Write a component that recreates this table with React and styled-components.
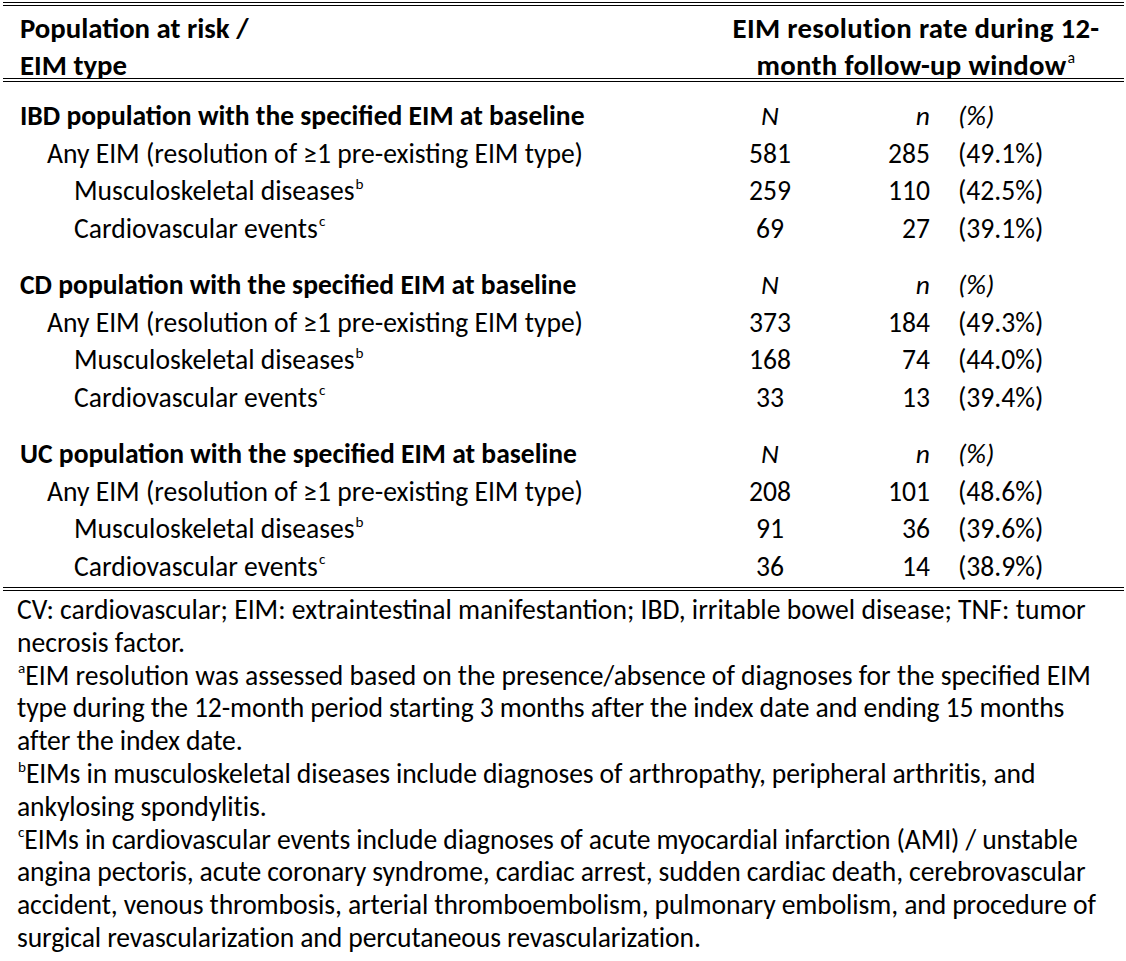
import React from 'react';
import styled, { createGlobalStyle } from 'styled-components';

const GlobalStyle = createGlobalStyle`
  html, body {
    margin: 0;
    padding: 0;
    background: #fff;
  }
  body {
    font-family: Carlito, Lato, "Liberation Sans", sans-serif;
    color: #000;
  }
`;

const Page = styled.div`
  width: 1121px;
  margin: 0 3px;
  padding-top: 2px;
  font-size: 27.6px;
`;

const Table = styled.div`
  border-top: 4px double #000;
  border-bottom: 4px double #000;
`;

const HeaderRow = styled.div`
  display: grid;
  grid-template-columns: 697px 1fr;
  border-bottom: 4px double #000;
  height: 76px;
  padding-top: 4px;
  box-sizing: border-box;
  line-height: 37px;
  font-size: 28.8px;
  font-weight: 700;
`;

const HeaderLabel = styled.div`
  padding-left: 17px;
  white-space: nowrap;
`;

const HeaderValue = styled.div`
  text-align: center;
  padding-left: 8px;
  letter-spacing: 0.3px;
  white-space: nowrap;
`;

const Section = styled.div`
  padding-top: ${(p) => (p.first ? 15 : 19)}px;
  padding-bottom: ${(p) => (p.last ? 2 : 0)}px;
`;

const Row = styled.div`
  display: grid;
  grid-template-columns: 697px 140px 94px 1fr;
  height: 37.5px;
  line-height: 37.5px;
  white-space: nowrap;
`;

const Label = styled.div`
  padding-left: ${(p) => 17 + p.level * 27}px;
  font-weight: ${(p) => (p.level === 0 ? 700 : 400)};
`;

const NCell = styled.div`
  text-align: center;
  font-style: ${(p) => (p.italic ? 'italic' : 'normal')};
`;

const SubCell = styled.div`
  text-align: right;
  padding-right: 4px;
  font-style: ${(p) => (p.italic ? 'italic' : 'normal')};
`;

const PctCell = styled.div`
  padding-left: 24px;
  font-style: ${(p) => (p.italic ? 'italic' : 'normal')};
`;

const Sup = styled.sup`
  font-size: 0.55em;
  line-height: 0;
  vertical-align: 0.75em;
  margin-left: 1px;
  font-weight: 400;
`;

const Notes = styled.div`
  padding: 3px 0 0 14px;
  line-height: 32.8px;
  white-space: nowrap;
`;

const Note = styled.p`
  margin: 0;
  letter-spacing: ${(p) => (p.condensed ? '-0.1px' : '0')};
`;

const sections = [
  {
    title: 'IBD population with the specified EIM at baseline',
    rows: [
      ['581', '285', '(49.1%)'],
      ['259', '110', '(42.5%)'],
      ['69', '27', '(39.1%)'],
    ],
  },
  {
    title: 'CD population with the specified EIM at baseline',
    rows: [
      ['373', '184', '(49.3%)'],
      ['168', '74', '(44.0%)'],
      ['33', '13', '(39.4%)'],
    ],
  },
  {
    title: 'UC population with the specified EIM at baseline',
    rows: [
      ['208', '101', '(48.6%)'],
      ['91', '36', '(39.6%)'],
      ['36', '14', '(38.9%)'],
    ],
  },
];

const rowLabels = [
  { text: 'Any EIM (resolution of \u22651 pre-existing EIM type)', level: 1 },
  { text: 'Musculoskeletal diseases', sup: 'b', level: 2 },
  { text: 'Cardiovascular events', sup: 'c', level: 2 },
];

export default function App() {
  return (
    <Page>
      <GlobalStyle />
      <Table>
        <HeaderRow>
          <HeaderLabel>
            Population at risk /<br />
            EIM type
          </HeaderLabel>
          <HeaderValue>
            EIM resolution rate during 12-<br />
            month follow-up window<Sup>a</Sup>
          </HeaderValue>
        </HeaderRow>
        {sections.map((s, i) => (
          <Section key={s.title} first={i === 0} last={i === sections.length - 1}>
            <Row>
              <Label level={0}>{s.title}</Label>
              <NCell italic>N</NCell>
              <SubCell italic>n</SubCell>
              <PctCell italic>(%)</PctCell>
            </Row>
            {s.rows.map((r, j) => (
              <Row key={j}>
                <Label level={rowLabels[j].level}>
                  {rowLabels[j].text}
                  {rowLabels[j].sup && <Sup>{rowLabels[j].sup}</Sup>}
                </Label>
                <NCell>{r[0]}</NCell>
                <SubCell>{r[1]}</SubCell>
                <PctCell>{r[2]}</PctCell>
              </Row>
            ))}
          </Section>
        ))}
      </Table>
      <Notes>
        <Note>
          CV: cardiovascular; EIM: extraintestinal manifestantion; IBD, irritable bowel disease; TNF: tumor<br />
          necrosis factor.
        </Note>
        <Note>
          <Sup>a</Sup>EIM resolution was assessed based on the presence/absence of diagnoses for the specified EIM
        </Note>
        <Note condensed>
          type during the 12-month period starting 3 months after the index date and ending 15 months<br />
          after the index date.
        </Note>
        <Note condensed>
          <Sup>b</Sup>EIMs in musculoskeletal diseases include diagnoses of arthropathy, peripheral arthritis, and<br />
          ankylosing spondylitis.
        </Note>
        <Note condensed>
          <Sup>c</Sup>EIMs in cardiovascular events include diagnoses of acute myocardial infarction (AMI) / unstable<br />
          angina pectoris, acute coronary syndrome, cardiac arrest, sudden cardiac death, cerebrovascular<br />
          accident, venous thrombosis, arterial thromboembolism, pulmonary embolism, and procedure of<br />
          surgical revascularization and percutaneous revascularization.
        </Note>
      </Notes>
    </Page>
  );
}
